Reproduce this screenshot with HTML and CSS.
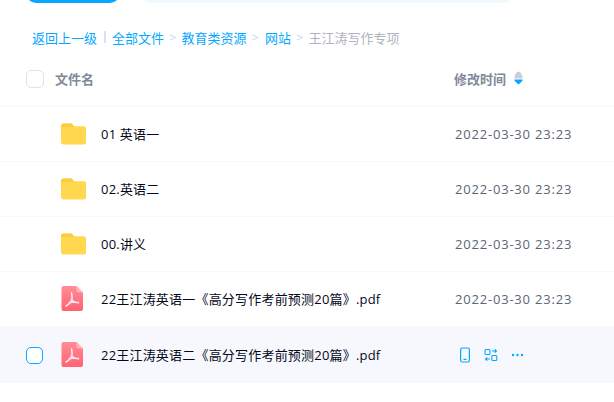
FILE: index.html
```html
<!DOCTYPE html>
<html lang="zh-CN">
<head>
  <meta charset="UTF-8" />
  <title>文件列表</title>
  <link rel="stylesheet" href="styles.css">
</head>
<body>
  <div class="toolbar">
    <div class="upload-btn"></div>
    <div class="search-box"></div>
  </div>

  <div class="crumbs">
    <a>返回上一级</a>
    <span class="bar"></span>
    <a>全部文件</a>
    <span class="sep">&gt;</span>
    <a>教育类资源</a>
    <span class="sep">&gt;</span>
    <a>网站</a>
    <span class="sep">&gt;</span>
    <span class="current">王江涛写作专项</span>
  </div>

  <div class="list">
    <div class="row head">
      <span class="check"></span>
      <span class="name">文件名</span>
      <span class="time">修改时间
        <svg class="sort" width="9" height="14" viewBox="0 0 9 14">
          <path d="M4.5 0.5 C6 0.5 8.5 3.5 8.5 6.5 C8.5 7 8.2 7.4 7.6 7.4 H1.4 C0.8 7.4 0.5 7 0.5 6.5 C0.5 3.5 3 0.5 4.5 0.5 Z" fill="#c9ced8" />
          <path d="M1 8.6 H8 C8.6 8.6 8.8 9.2 8.4 9.7 L5.2 13 C4.8 13.4 4.2 13.4 3.8 13 L0.6 9.7 C0.2 9.2 0.4 8.6 1 8.6 Z" fill="#06a7ff" />
        </svg>
      </span>
    </div>

    <div class="row">
      <svg class="icon" width="26" height="24" viewBox="0 0 26 24"><use href="#folder" /></svg>
      <span class="name">01 英语一</span>
      <span class="time">2022-03-30 23:23</span>
    </div>
    <div class="row">
      <svg class="icon" width="26" height="24" viewBox="0 0 26 24"><use href="#folder" /></svg>
      <span class="name">02.英语二</span>
      <span class="time">2022-03-30 23:23</span>
    </div>
    <div class="row">
      <svg class="icon" width="26" height="24" viewBox="0 0 26 24"><use href="#folder" /></svg>
      <span class="name">00.讲义</span>
      <span class="time">2022-03-30 23:23</span>
    </div>
    <div class="row">
      <svg class="icon" width="26" height="26" viewBox="0 0 26 26"><use href="#pdf" /></svg>
      <span class="name">22王江涛英语一《高分写作考前预测20篇》.pdf</span>
      <span class="time">2022-03-30 23:23</span>
    </div>
    <div class="row active">
      <span class="check on"></span>
      <svg class="icon" width="26" height="26" viewBox="0 0 26 26"><use href="#pdf" /></svg>
      <span class="name">22王江涛英语二《高分写作考前预测20篇》.pdf</span>
      <span class="actions">
        <svg width="12" height="16" viewBox="0 0 12 16" fill="none" stroke="#06a7ff" stroke-width="1.2">
          <rect x="1.6" y="1" width="8.8" height="14" rx="1.8" />
          <path d="M4.5 12.4 H7.5" />
        </svg>
        <svg width="14" height="14" viewBox="0 0 14 14" fill="none" stroke="#06a7ff" stroke-width="1.1">
          <rect x="1" y="1.5" width="5" height="5" rx="1" />
          <rect x="7.8" y="7.5" width="5" height="5" rx="1" />
          <path d="M8 3 H12.5 M10.8 1.3 L12.5 3 L10.8 4.7" />
          <path d="M6 11 H1.5 M3.2 9.3 L1.5 11 L3.2 12.7" />
        </svg>
        <svg width="14" height="14" viewBox="0 0 14 14" fill="#06a7ff">
          <circle cx="2" cy="7" r="1.2" />
          <circle cx="6.5" cy="7" r="1.2" />
          <circle cx="11" cy="7" r="1.2" />
        </svg>
      </span>
    </div>
  </div>

  <svg width="0" height="0" class="defs">
    <defs>
      <g id="folder">
        <path d="M2.5 1.5 H9.5 C10.6 1.5 11.3 2 12 3 L12.8 4.2 H23 C24.4 4.2 25 5.2 25 6.5 V20 C25 21.4 24.4 22.5 23 22.5 H2.5 C1.1 22.5 0 21.4 0 20 V4 C0 2.6 1.1 1.5 2.5 1.5 Z" fill="#ffd84f" />
        <path d="M0 6.8 C0 5.6 1 5 2.2 5 H13.4 L11.6 2.5 C11 1.8 10.4 1.5 9.5 1.5 H2.5 C1.1 1.5 0 2.6 0 4 Z" fill="#fdcb3e" />
      </g>
      <g id="pdf">
        <linearGradient id="pdfFill" x1="0" y1="0" x2="0" y2="1">
          <stop offset="0" stop-color="#ff8d95" />
          <stop offset="1" stop-color="#ff6274" />
        </linearGradient>
        <path d="M2.5 0 H15.5 L22 6.5 V23 C22 24.1 21.1 25 20 25 H2.5 C1.4 25 0.5 24.1 0.5 23 V2 C0.5 0.9 1.4 0 2.5 0 Z" fill="url(#pdfFill)" />
        <path d="M15.5 0 L22 6.5 H17.5 C16.4 6.5 15.5 5.6 15.5 4.5 Z" fill="#ffb3b9" />
        <path d="M5 20 C7.8 18.6 10 16 10.8 13.6 C11.2 12 11 9.5 10.6 7 M10.8 13.6 C12.2 15.6 14.5 16.6 17.6 16.6 M8 17 C10 16.2 12 16 14 16" fill="none" stroke="#ffe6e9" stroke-width="1.6" stroke-linecap="round" />
      </g>
    </defs>
  </svg>
</body>
</html>
```

FILE: styles.css
```css
body {
  margin: 0;
  background: #fff;
  font-family: "Open Sans", "Noto Sans CJK SC", sans-serif;
  color: #03081a;
  overflow: hidden;
}
.defs {
  position: absolute;
}
.toolbar {
  display: flex;
  gap: 20px;
  height: 3px;
  padding-left: 26px;
  overflow: hidden;
}
.upload-btn {
  width: 94px;
  height: 20px;
  margin-top: -17px;
  background: #06a7ff;
  border-radius: 10px;
}
.search-box {
  width: 373px;
  height: 20px;
  margin-top: -17px;
  background: #eff9fe;
  border-radius: 10px;
}
.crumbs {
  display: flex;
  align-items: center;
  height: 20px;
  margin-top: 25px;
  padding-left: 32px;
  font-size: 13px;
  color: #06a7ff;
}
.crumbs > * {
  position: relative;
  top: -1px;
}
.bar {
  width: 2px;
  height: 12px;
  margin: 0 6px 0 7px;
  background: #d3e2f7;
}
.sep {
  margin: 0 5px;
  color: #c4d8f4;
}
.sep:nth-of-type(3) {
  margin-right: 6px;
}
.current {
  color: #afb3bf;
}
.list {
  margin-top: 4px;
}
.row {
  display: flex;
  align-items: center;
  height: 54px;
  border-bottom: 1px solid #f7f7f9;
  padding-left: 61px;
  position: relative;
  font-size: 13px;
}
.row.head {
  padding-left: 26px;
  font-weight: 600;
  color: #818999;
}
.row.active {
  background: #f7f8fd;
  border-bottom: none;
  height: 56px;
}
.row .icon {
  flex: none;
  margin-right: 14px;
}
.check {
  width: 16px;
  height: 16px;
  border: 1px solid #dfe1e6;
  border-radius: 5px;
  background: #fff;
}
.head .check {
  margin-right: 11px;
}
.check.on {
  position: absolute;
  left: 26px;
  width: 15px;
  height: 15px;
  border: 1.5px solid #06a7ff;
}
.name {
  flex: none;
  width: 354px;
  padding-bottom: 1px;
  letter-spacing: 0.2px;
}
.head .name {
  width: 399px;
  padding-bottom: 2px;
  letter-spacing: 0;
}
.row .time {
  display: flex;
  align-items: center;
  gap: 8px;
  color: #5c6575;
  letter-spacing: 0.8px;
}
.head .time {
  padding-bottom: 2px;
  color: #818999;
  letter-spacing: 0;
}
.actions {
  display: flex;
  align-items: center;
  gap: 13px;
  margin-left: 4px;
}
```
